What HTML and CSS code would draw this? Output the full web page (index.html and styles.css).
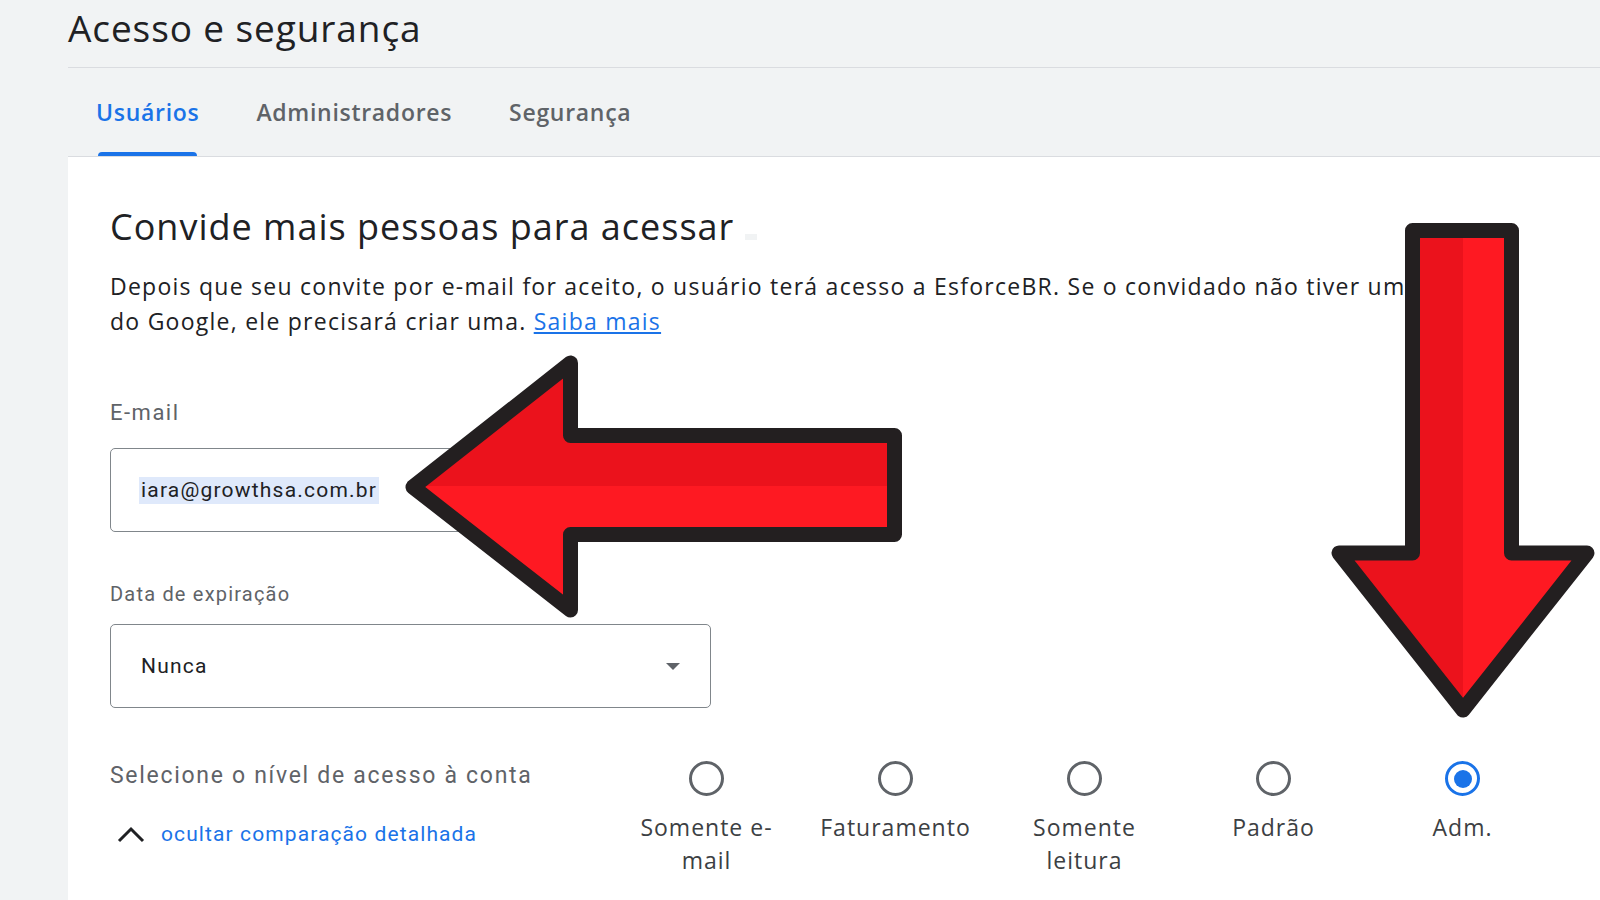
FILE: index.html
```html
<!DOCTYPE html>
<html lang="pt-BR">
<head>
<meta charset="utf-8">
<title>Acesso e segurança</title>
<link rel="stylesheet" href="styles.css">
</head>
<body>
<div class="page">
  <header class="head">
    <h1 class="title">Acesso e segurança</h1>
  </header>
  <nav class="tabs">
    <a class="tab active">Usuários</a>
    <a class="tab">Administradores</a>
    <a class="tab">Segurança</a>
  </nav>
  <main class="card">
    <h2 class="card-title">Convide mais pessoas para acessar <span class="redact"></span></h2>
    <p class="intro">Depois que seu convite por e-mail for aceito, o usuário terá acesso a EsforceBR. Se o convidado não tiver uma Conta do Google, ele precisará criar uma. <a class="link">Saiba mais</a></p>

    <div class="field-label">E-mail</div>
    <div class="input"><span class="selected-text">iara@growthsa.com.br</span></div>

    <div class="field-label small">Data de expiração</div>
    <div class="input select"><span>Nunca</span><span class="caret"></span></div>

    <div class="access">
      <div class="access-left">
        <div class="access-label">Selecione o nível de acesso à conta</div>
        <a class="toggle">
          <svg class="chevron" width="30" height="18" viewBox="0 0 30 18"><path d="M3 16 L15 4 L27 16" fill="none" stroke="#202124" stroke-width="3"/></svg>
          <span>ocultar comparação detalhada</span>
        </a>
      </div>
      <div class="levels">
        <div class="level"><span class="radio"></span><span class="level-name">Somente e-mail</span></div>
        <div class="level"><span class="radio"></span><span class="level-name">Faturamento</span></div>
        <div class="level"><span class="radio"></span><span class="level-name">Somente leitura</span></div>
        <div class="level"><span class="radio"></span><span class="level-name">Padrão</span></div>
        <div class="level"><span class="radio checked"></span><span class="level-name">Adm.</span></div>
      </div>
    </div>
  </main>

  <svg class="arrows" width="1600" height="900" viewBox="0 0 1600 900">
    <defs>
      <linearGradient id="gl" x1="0" y1="0" x2="0" y2="1">
        <stop offset="0.5" stop-color="#eb121c"/>
        <stop offset="0.5" stop-color="#fe1922"/>
      </linearGradient>
      <linearGradient id="gd" x1="0" y1="0" x2="1" y2="0">
        <stop offset="0.5" stop-color="#eb121c"/>
        <stop offset="0.5" stop-color="#fe1922"/>
      </linearGradient>
    </defs>
    <polygon points="413,487 570.5,363 570.5,435.5 894.5,435.5 894.5,534.5 570.5,534.5 570.5,610" fill="url(#gl)" stroke="#231f20" stroke-width="15" stroke-linejoin="round"/>
    <polygon points="1412.5,230.5 1511.5,230.5 1511.5,553 1587,553 1463,710 1339,553 1412.5,553" fill="url(#gd)" stroke="#231f20" stroke-width="15" stroke-linejoin="round"/>
  </svg>
</div>
</body>
</html>
```

FILE: styles.css
```css
* { box-sizing: border-box; }

html, body {
  margin: 0;
  padding: 0;
}

body {
  background: #f1f3f4;
  font-family: "Open Sans", "Noto Sans", sans-serif;
  color: #202124;
  overflow: hidden;
}

.page {
  position: relative;
  width: 1600px;
  height: 900px;
  padding-left: 68px;
  display: flex;
  flex-direction: column;
}

.head {
  padding-top: 2px;
  padding-bottom: 13px;
  border-bottom: 1px solid #dadce0;
}

.title {
  margin: 0;
  font-family: "Open Sans", sans-serif;
  font-weight: 400;
  font-size: 37px;
  line-height: 52px;
  color: #202124;
  letter-spacing: 0.9px;
}

.tabs {
  display: flex;
  gap: 57px;
  padding-left: 28px;
  height: 89px;
  border-bottom: 1px solid #dadce0;
}

.tab {
  position: relative;
  display: flex;
  align-items: center;
  font-family: "Open Sans", sans-serif;
  font-weight: 600;
  font-size: 23px;
  letter-spacing: 0.7px;
  color: #5f6368;
}

.tab.active {
  color: #1a73e8;
}

.tab.active::after {
  content: "";
  position: absolute;
  left: 2px;
  right: 2px;
  bottom: 0;
  height: 4px;
  background: #1a73e8;
  border-radius: 4px 4px 0 0;
}

.card {
  flex: 1;
  background: #ffffff;
  padding: 46px 0 0 42px;
}

.card-title {
  margin: 0;
  font-family: "Open Sans", sans-serif;
  font-weight: 400;
  font-size: 36px;
  line-height: 48px;
  color: #202124;
  letter-spacing: 1px;
}

.redact {
  display: inline-block;
  width: 12px;
  height: 6px;
  background: #f1f3f4;
  vertical-align: baseline;
}

.intro {
  margin: 18px 0 0;
  max-width: 1400px;
  font-family: "Open Sans", sans-serif;
  font-size: 23px;
  line-height: 35px;
  letter-spacing: 1.25px;
  color: #202124;
}

.link {
  color: #1a73e8;
  text-decoration: underline;
}

.field-label {
  margin-top: 62px;
  font-family: Roboto, sans-serif;
  font-size: 22px;
  line-height: 24px;
  letter-spacing: 1.5px;
  color: #5f6368;
}

.field-label.small {
  margin-top: 50px;
  font-size: 20px;
  letter-spacing: 1.2px;
}

.input {
  margin-top: 23px;
  width: 601px;
  height: 84px;
  border: 1px solid #80868b;
  border-radius: 5px;
  display: flex;
  align-items: center;
  padding-left: 30px;
  font-family: Roboto, sans-serif;
  font-size: 21px;
  letter-spacing: 1.2px;
  color: #202124;
}

.selected-text {
  background: #dfe9fb;
  line-height: 27px;
  padding: 0 2px;
  margin-left: -2px;
}

.select {
  margin-top: 18px;
  height: 84px;
  justify-content: space-between;
  padding-right: 30px;
}

.caret {
  width: 0;
  height: 0;
  border-left: 7px solid transparent;
  border-right: 7px solid transparent;
  border-top: 7px solid #5f6368;
}

.access {
  margin-top: 53px;
  display: flex;
}

.access-left {
  width: 502px;
}

.access-label {
  font-family: Roboto, sans-serif;
  font-size: 23px;
  line-height: 30px;
  letter-spacing: 1.7px;
  color: #5f6368;
}

.toggle {
  margin-top: 28px;
  display: flex;
  align-items: center;
  gap: 15px;
  padding-left: 6px;
  font-family: Roboto, sans-serif;
  font-size: 21px;
  line-height: 30px;
  letter-spacing: 1.1px;
  color: #1a73e8;
}

.chevron {
  display: block;
}

.levels {
  display: flex;
}

.level {
  width: 189px;
  display: flex;
  flex-direction: column;
  align-items: center;
}

.radio {
  width: 35px;
  height: 35px;
  border: 3px solid #5f6368;
  border-radius: 50%;
  display: flex;
  align-items: center;
  justify-content: center;
}

.radio.checked {
  border-color: #1a73e8;
}

.radio.checked::after {
  content: "";
  width: 18px;
  height: 18px;
  border-radius: 50%;
  background: #1a73e8;
}

.level-name {
  margin-top: 15px;
  width: 160px;
  text-align: center;
  font-family: "Open Sans", sans-serif;
  font-size: 23px;
  line-height: 33px;
  letter-spacing: 1px;
  color: #3c4043;
}

.arrows {
  position: absolute;
  top: 0;
  left: 0;
  pointer-events: none;
}
```
